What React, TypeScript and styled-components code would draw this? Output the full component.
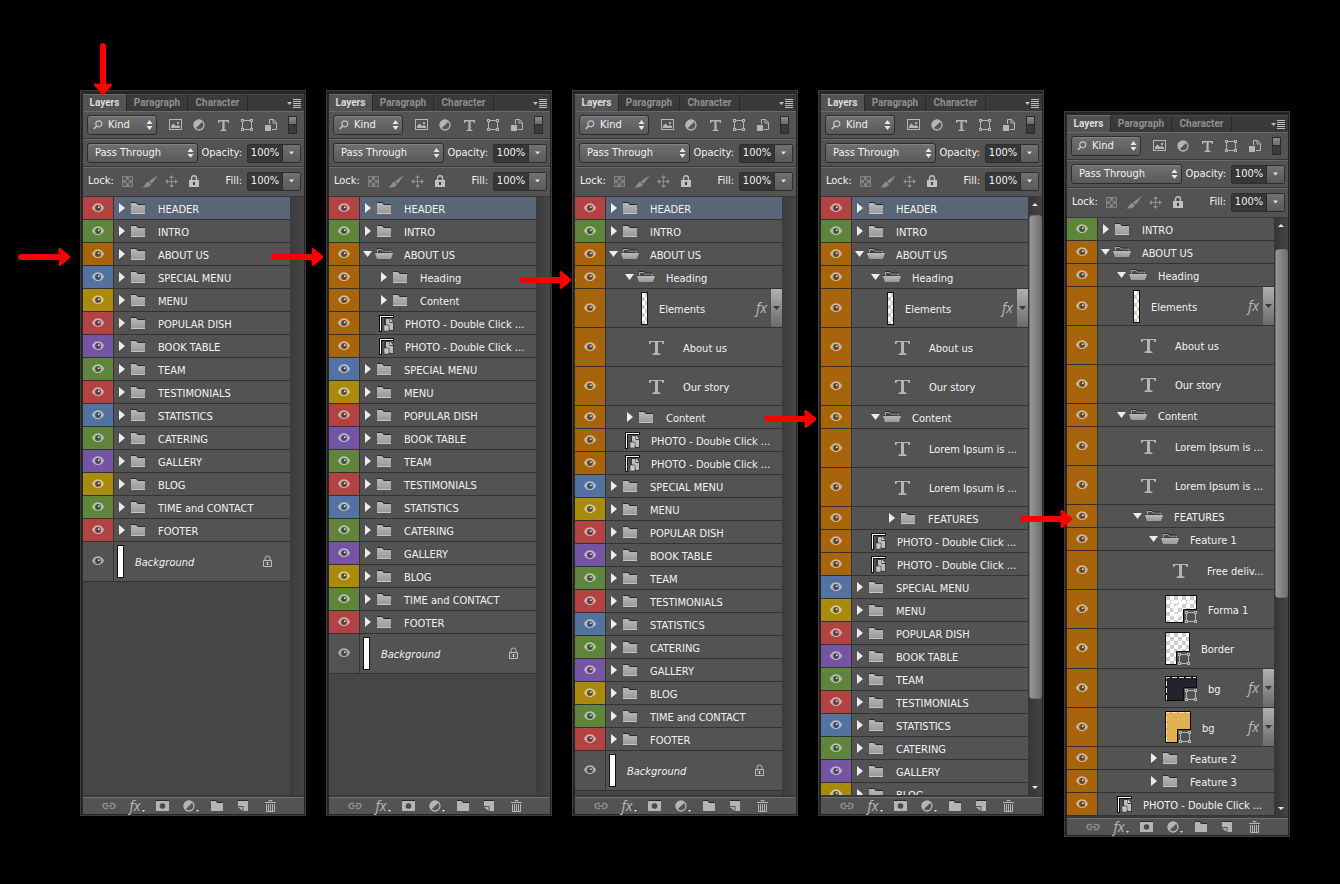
import React from "react";
import styled, { createGlobalStyle, css } from "styled-components";

const GlobalStyle = createGlobalStyle`
  *, *::before, *::after { box-sizing: border-box; }
  body {
    margin: 0;
    background: #000;
    color: #f0f0f0;
    font-family: "DejaVu Sans Condensed", "Noto Sans", sans-serif;
    font-size: 11px;
    line-height: 14px;
  }
  button, input, select { font: inherit; color: inherit; margin: 0; padding: 0; border: 0; }
  button { background: none; cursor: pointer; }
  svg { display: block; flex: none; }
`;

/* ---------- data ---------- */

const tones = {
  red: "#b24343",
  green: "#5f853d",
  orange: "#a8640b",
  blue: "#5372a0",
  yellow: "#a98a0b",
  violet: "#7455a3",
  none: "#535353",
};
type Tone = keyof typeof tones;
type Kind =
  | "folder" | "open" | "smart" | "text" | "strip" | "background"
  | "forma" | "border" | "dark" | "gold";

interface Layer {
  name: string;
  kind: Kind;
  tone: Tone;
  level: number;
  selected?: boolean;
}

const layer = (name: string, tone: Tone, kind: Kind = "folder", level = 0): Layer => ({ name, tone, kind, level });
const inner = (name: string, kind: Kind, level: number) => layer(name, "orange", kind, level);

const header: Layer = { ...layer("HEADER", "red"), selected: true };
const intro = layer("INTRO", "green");
const aboutClosed = layer("ABOUT US", "orange");
const aboutOpen = layer("ABOUT US", "orange", "open");
const photo = inner("PHOTO - Double Click ...", "smart", 1);
const headingOpen = [
  inner("Heading", "open", 1),
  inner("Elements", "strip", 2),
  inner("About us", "text", 2),
  inner("Our story", "text", 2),
];
const contentOpen = [
  inner("Content", "open", 1),
  inner("Lorem Ipsum is ...", "text", 2),
  inner("Lorem Ipsum is ...", "text", 2),
];
const sections = [
  layer("SPECIAL MENU", "blue"),
  layer("MENU", "yellow"),
  layer("POPULAR DISH", "red"),
  layer("BOOK TABLE", "violet"),
  layer("TEAM", "green"),
  layer("TESTIMONIALS", "red"),
  layer("STATISTICS", "blue"),
  layer("CATERING", "green"),
  layer("GALLERY", "violet"),
  layer("BLOG", "yellow"),
];
const rest = [
  ...sections,
  layer("TIME and CONTACT", "green"),
  layer("FOOTER", "red"),
  layer("Background", "none", "background"),
];

interface Pointer { x: number; y: number; down?: boolean }
interface PanelData {
  layers: Layer[];
  pointers: Pointer[];
  thumb?: { offset: number; length: number };
  lowered?: boolean;
}

const panels: PanelData[] = [
  {
    layers: [header, intro, aboutClosed, ...rest],
    pointers: [{ x: 14, y: -48, down: true }, { x: -63, y: 158 }],
  },
  {
    layers: [header, intro, aboutOpen, inner("Heading", "folder", 1), inner("Content", "folder", 1), photo, photo, ...rest],
    pointers: [{ x: -56, y: 158 }],
  },
  {
    layers: [header, intro, aboutOpen, ...headingOpen, inner("Content", "folder", 1), photo, photo, ...rest],
    pointers: [{ x: -54, y: 181 }],
  },
  {
    layers: [header, intro, aboutOpen, ...headingOpen, ...contentOpen, inner("FEATURES", "folder", 2), photo, photo, ...sections],
    pointers: [{ x: -55, y: 320 }],
    thumb: { offset: 18, length: 484 },
  },
  {
    layers: [
      intro, aboutOpen, ...headingOpen, ...contentOpen,
      inner("FEATURES", "open", 2),
      inner("Feature 1", "open", 3),
      inner("Free deliv...", "text", 4),
      inner("Forma 1", "forma", 4),
      inner("Border", "border", 4),
      inner("bg", "dark", 4),
      inner("bg", "gold", 4),
      inner("Feature 2", "folder", 3),
      inner("Feature 3", "folder", 3),
      photo,
    ],
    pointers: [{ x: -45, y: 399 }],
    thumb: { offset: 31, length: 349 },
    lowered: true,
  },
];

/* ---------- layout ---------- */

const Board = styled.main`
  display: flex;
  align-items: flex-start;
  gap: 20px;
  min-height: 100vh;
  padding: 90px 50px 47px 80px;
`;

const PanelFrame = styled.section<{ $lowered?: boolean }>`
  position: relative;
  flex: 1 1 0;
  min-width: 226px;
  height: calc(100vh - 158px);
  min-height: 480px;
  margin-top: ${(p) => (p.$lowered ? 21 : 0)}px;
  display: flex;
  flex-direction: column;
  background: #535353;
  border: solid #262626;
  border-width: 4px 2px 2px 3px;
  outline: 1px solid #3c3c3c;
  outline-offset: -1px;
`;

const TabStrip = styled.div`
  display: flex;
  height: 17px;
  background: #3a3a3a;
`;

const Tab = styled.button<{ $active?: boolean; $width: number }>`
  width: ${(p) => p.$width}px;
  font-family: Roboto, sans-serif;
  font-size: 10px;
  font-weight: 700;
  line-height: 16px;
  color: ${(p) => (p.$active ? "#dcdcdc" : "#8e8e8e")};
  background: ${(p) => (p.$active ? "#535353" : "transparent")};
  border-top: 1px solid ${(p) => (p.$active ? "#6a6a6a" : "#484848")};
  border-right: 1px solid #2a2a2a;
`;

const TabFill = styled.div`
  flex: 1;
  display: flex;
  align-items: center;
  justify-content: flex-end;
  padding-right: 3px;
  border-top: 1px solid #484848;
`;

const ControlRow = styled.div<{ $last?: boolean }>`
  display: flex;
  align-items: center;
  height: ${(p) => (p.$last ? 30 : 28)}px;
  padding: 0 3px ${(p) => (p.$last ? 2 : 0)}px 4px;
  border-top: 1px solid #686868;
  border-bottom: 1px solid #383838;
`;

const raised = css`
  background-image: linear-gradient(#707070, #5a5a5a);
  border: 1px solid #2e2e2e;
`;

const SelectBox = styled.label<{ $width: number }>`
  position: relative;
  display: flex;
  align-items: center;
  width: ${(p) => p.$width}px;
  height: 20px;
  ${raised}
  border-radius: 3px;
  box-shadow: inset 0 1px 0 #828282;
`;

const Select = styled.select<{ $inset: number }>`
  appearance: none;
  width: 100%;
  height: 18px;
  padding-left: ${(p) => p.$inset}px;
  background: none;
  outline: none;
`;

const SelectGlyph = styled.span<{ $left?: boolean }>`
  position: absolute;
  ${(p) => (p.$left ? "left: 5px;" : "right: 3px;")}
  pointer-events: none;
`;

const IconGroup = styled.div<{ $start: number }>`
  display: flex;
  align-items: center;
  padding-left: ${(p) => p.$start}px;
`;

const IconButton = styled.button<{ $width: number }>`
  display: flex;
  align-items: center;
  justify-content: center;
  width: ${(p) => p.$width}px;
  height: 16px;
`;

const MenuButton = styled(IconButton)`
  padding-left: 3px;
`;

const Toggle = styled.button`
  width: 9px;
  height: 18px;
  margin: 0 4px 0 auto;
  border: 1px solid #2c2c2c;
  background: linear-gradient(#8a8a8a, #6a6a6a 45%, #2c2c2c 45%, #3c3c3c 55%);
`;

const LockLabel = styled.span`
  padding-left: 1px;
`;

const Field = styled.div`
  display: flex;
  align-items: center;
  gap: 5px;
  margin-left: auto;
`;

const FieldBox = styled.div`
  display: flex;
  height: 19px;
  border: 1px solid #2e2e2e;
  border-radius: 2px;
`;

const ValueInput = styled.input`
  width: 34px;
  background: #373737;
  text-align: center;
  outline: none;
`;

const DropButton = styled.button`
  display: flex;
  align-items: center;
  justify-content: center;
  width: 18px;
  border-left: 1px solid #2e2e2e;
  background: linear-gradient(#707070, #5a5a5a);
`;

const ListArea = styled.div`
  flex: 1;
  min-height: 0;
  display: flex;
  overflow: hidden;
  background: #464646;
  border-bottom: 2px solid #3a3a3a;
`;

const LayerList = styled.ul`
  flex: 1;
  min-width: 0;
  margin: 0;
  padding: 0;
  list-style: none;
  overflow: hidden;
`;

const Row = styled.li<{ $height: number }>`
  display: flex;
  height: ${(p) => p.$height}px;
  border-bottom: 1px solid #343434;
`;

const EyeButton = styled.button<{ $tone: string }>`
  display: flex;
  align-items: center;
  justify-content: center;
  width: 31px;
  padding-bottom: 1px;
  border-right: 1px solid #343434;
  background: ${(p) => p.$tone};
`;

const RowBody = styled.div<{ $level: number; $selected?: boolean }>`
  flex: 1;
  min-width: 0;
  display: flex;
  align-items: center;
  padding-left: ${(p) => 3 + p.$level * 16}px;
  background: ${(p) => (p.$selected ? "#596678" : "#535353")};
`;

const Disclosure = styled.button`
  display: flex;
  align-items: center;
  gap: 2px;
`;

const TextSlot = styled.span`
  display: flex;
  justify-content: center;
  width: 31px;
`;

const LayerName = styled.span<{ $italic?: boolean }>`
  flex: 1;
  min-width: 0;
  padding: 3px 0 0 11px;
  white-space: nowrap;
  font-style: ${(p) => (p.$italic ? "italic" : "normal")};
`;

const Effects = styled.span`
  font-family: "Open Sans", sans-serif;
  font-size: 14px;
  font-style: italic;
  line-height: 16px;
  color: #b8b8b8;
`;

const EffectsButton = styled.button`
  display: flex;
  align-items: center;
  justify-content: center;
  align-self: stretch;
  width: 11px;
  margin-left: 4px;
  background: linear-gradient(#b0b0b0, #6a6a6a);
`;

const LockSlot = styled.span`
  padding-right: 17px;
`;

const ScrollTrack = styled.div<{ $active: boolean }>`
  position: relative;
  display: flex;
  flex-direction: column;
  justify-content: space-between;
  width: 14px;
  padding: 4px 1px;
  background: ${(p) => (p.$active ? "linear-gradient(90deg, #363636, #444)" : "linear-gradient(90deg, #3c3c3c, #464646)")};
`;

const ScrollThumb = styled.div`
  position: absolute;
  left: 1px;
  right: 0;
  border-radius: 3px;
  background: linear-gradient(90deg, #969696, #707070);
  border: 1px solid #6c6c6c;
`;

const ScrollButton = styled.button`
  display: flex;
  justify-content: center;
  padding: 2px 0;
`;

const Footer = styled.footer`
  display: flex;
  align-items: center;
  height: 17px;
  padding-left: 12px;
  border-top: 1px solid #6e6e6e;
`;

const PointerMark = styled.svg<{ $x: number; $y: number }>`
  position: absolute;
  z-index: 2;
  left: ${(p) => p.$x}px;
  top: ${(p) => p.$y}px;
  pointer-events: none;
`;

/* ---------- icons ---------- */

const ink = "#b4b4b4";

const UpDown = () => (
  <svg width="7" height="10" viewBox="0 0 7 10" fill="#e6e6e6"><path d="M3.5 0 6.5 4h-6zM3.5 10 .5 6h6z" /></svg>
);
const Caret = ({ color = "#e0e0e0", width = 5 }: { color?: string; width?: number }) => (
  <svg width={width} height="4" viewBox="0 0 7 4"><path d="M0 0h7L3.5 4z" fill={color} /></svg>
);
const CaretUp = () => (
  <svg width="6" height="3" viewBox="0 0 6 3"><path d="M0 3h6L3 0z" fill="#e6e6e6" /></svg>
);
const CaretDown = () => (
  <svg width="6" height="3" viewBox="0 0 6 3"><path d="M0 0h6L3 3z" fill="#e6e6e6" /></svg>
);
const MenuIcon = () => (
  <svg width="14" height="9" viewBox="0 0 14 9" fill="#bcbcbc">
    <path d="M0 3h5L2.500 6z" /><path d="M6 0h8v1H6zM6 2h8v1H6zM6 4h8v1H6zM6 6h8v1H6zM6 8h8v1H6z" />
  </svg>
);
const Magnifier = () => (
  <svg width="10" height="10" viewBox="0 0 10 10" fill="none" stroke="#c4c4c4">
    <circle cx="5.8" cy="3.8" r="3" strokeWidth="1.2" /><path d="M3.6 6 .8 9" strokeWidth="1.6" />
  </svg>
);
const ImageIcon = () => (
  <svg width="13" height="12" viewBox="0 0 13 12">
    <rect x=".5" y=".5" width="12" height="10" fill="none" stroke={ink} />
    <path d="M2 9V7l2.500-2.500L7 7l2-1 2 1.500V9z" fill={ink} /><rect x="8" y="3" width="2" height="2" fill={ink} />
  </svg>
);
const HalfCircle = () => (
  <svg width="12" height="12" viewBox="0 0 12 12">
    <circle cx="6" cy="6" r="5" fill="#555" stroke={ink} strokeWidth="1.3" />
    <path d="M2.200 9.800A5.300 5.300 0 0 1 9.800 2.200z" fill={ink} />
  </svg>
);
const Letter = ({ size }: { size: number }) => (
  <svg width={size} height={size} viewBox="0 0 15 15">
    <path d="M0 0h15v4h-1.300L12.800 2H9V13l2.500.8V15h-8v-1.200L6 13V2H2.200L1.300 4H0z" fill={ink} />
    {size > 12 && <path d="M0 0h15" stroke="#2c2c2c" strokeWidth="1.500" />}
  </svg>
);
const ShapeIcon = () => (
  <svg width="12" height="12" viewBox="0 0 12 12" fill="none" stroke={ink}>
    <path d="M3 1.500h6M3 10.500h6M1.500 3v6M10.500 3v6" />
    <rect x=".5" y=".5" width="2" height="2" /><rect x="9.500" y=".5" width="2" height="2" />
    <rect x=".5" y="9.500" width="2" height="2" /><rect x="9.500" y="9.500" width="2" height="2" />
  </svg>
);
const SmartIcon = () => (
  <svg width="12" height="12" viewBox="0 0 12 12">
    <path d="M4.500 5V.5h4l3 3v7H7" fill="none" stroke={ink} /><path d="M8 1v3h3.500" fill="none" stroke={ink} />
    <rect x="0" y="6" width="6" height="6" fill={ink} />
  </svg>
);
const Checker = () => (
  <svg width="11" height="11" viewBox="0 0 11 11">
    <rect width="11" height="11" fill="#808080" />
    <path d="M1 1h3v3H1zM7 1h3v3H7zM4 4h3v3H4zM1 7h3v3H1zM7 7h3v3H7z" fill="#5c5c5c" />
  </svg>
);
const Brush = () => (
  <svg width="16" height="13" viewBox="0 0 16 13" fill="#8c8c8c">
    <path d="M16 0 9.800 8.800 7 6.300z" /><path d="M6.300 6.800 9 9.300C8 12.200 4.500 13 0 12.300 3 11.800 3.200 7.800 6.300 6.800z" />
  </svg>
);
const MoveIcon = () => (
  <svg width="13" height="13" viewBox="0 0 13 13">
    <path d="M6.500 1v11M1 6.500h11" stroke="#8c8c8c" />
    <path d="M6.500 0 9 3H4zM6.500 13 4 10h5zM0 6.500 3 4v5zM13 6.500 10 9V4z" fill="#8c8c8c" />
  </svg>
);
const LockSolid = () => (
  <svg width="10" height="12" viewBox="0 0 10 12">
    <path d="M2.500 6V3.200a2.500 2.500 0 0 1 5 0V6" fill="none" stroke="#c0c0c0" strokeWidth="1.400" />
    <rect y="5" width="10" height="7" fill="#c0c0c0" /><rect x="4" y="7" width="2" height="3" fill="#444" />
  </svg>
);
const LockOutline = () => (
  <svg width="11" height="13" viewBox="0 0 11 13" fill="none" stroke="#bcbcbc">
    <path d="M3 6V3.500a2.500 2.500 0 0 1 5 0V6" /><path d="M1.500 5.500h8v6h-8z" /><path d="M3 7.500h5M3 9.500h5" strokeOpacity=".35" />
    <rect x="5" y="7" width="1" height="3" fill="#ddd" stroke="none" />
  </svg>
);
const Eye = () => (
  <svg width="12" height="10" viewBox="0 0 12 10">
    <path d="M0 5.200C2 1.500 4 .8 6 .8s4 .7 6 4.400C10 8.300 8 9 6 9S2 8.300 0 5.200z" fill="#fff" fillOpacity=".5" />
    <path d="M.3 4.600C2 1.300 4 .8 6 .8s4 .5 5.700 3.800" fill="none" stroke="#eee" strokeOpacity=".5" />
    <circle cx="6" cy="5" r="2.900" fill="#000" fillOpacity=".58" /><circle cx="6.800" cy="4.200" r=".9" fill="#ddd" />
  </svg>
);
const ArrowRight = () => (
  <svg width="10" height="10" viewBox="0 0 10 10"><path d="M2 0l6 5-6 5z" fill="#ececec" /></svg>
);
const ArrowDown = () => (
  <svg width="10" height="10" viewBox="0 0 10 10"><path d="M0 2h9L4.500 8z" fill="#ececec" /></svg>
);
const Gray = ({ id }: { id: string }) => (
  <defs><linearGradient id={id} x1="0" y1="0" x2="0" y2="1"><stop offset="0" stopColor="#b8b8b8" /><stop offset="1" stopColor="#989898" /></linearGradient></defs>
);
const FolderClosed = () => (
  <svg width="18" height="13" viewBox="0 0 18 13">
    <Gray id="fc" />
    <path d="M2 1h5.500L9 3h7v9H2z" fill="url(#fc)" />
    <path d="M2 .5h5.300L8.800 2.500H16" fill="none" stroke="#2b2b2b" /><path d="M2 11.500h14" stroke="#c2c2c2" />
  </svg>
);
const FolderOpen = () => (
  <svg width="18" height="13" viewBox="0 0 18 13">
    <Gray id="fo" />
    <path d="M2.500 6V1.500h4.300L8 3h7.500v3" fill="#4a4a4a" stroke="#a8a8a8" />
    <path d="M2 .5h5l1 1.500h7.500" fill="none" stroke="#2b2b2b" />
    <path d="M0 5h18l-2 6H2z" fill="url(#fo)" /><path d="M0 4.500h18" stroke="#333" strokeOpacity=".5" />
  </svg>
);
const SmartThumb = () => (
  <svg width="15" height="17" viewBox="0 0 15 17">
    <path d="M0 0h15v3H3v14H0z" fill="#101010" /><path d="M1 1h13v1H2v14H1z" fill="#fff" />
    <path d="M5 3h6l4 4v9H5z" fill="#3c3c3c" />
    <path d="M7 9V4h3.500v4H14v7h-3" fill="#bcbcbc" /><path d="M11 3.500 14 7h-3z" fill="#d0d0d0" />
    <path d="M5 10h5v6H5z" fill="#c4c4c4" stroke="#333" strokeWidth=".6" />
  </svg>
);
const StripThumb = ({ checker }: { checker?: boolean }) => (
  <svg width="7" height="33" viewBox="0 0 7 33">
    <rect x=".5" y=".5" width="6" height="32" fill="#fff" stroke="#111" />
    {checker && [1, 9, 17, 25].map((y) => <path key={y} d={`M4 ${y}h2v4H4zM1 ${y + 4}h3v${y > 20 ? 3 : 4}H1z`} fill="#ccc" />)}
  </svg>
);
const shapes = {
  forma: { w: 32, h: 28, fill: "url(#ck)" },
  border: { w: 25, h: 33, fill: "url(#ck)" },
  dark: { w: 32, h: 25, fill: "#23232b" },
  gold: { w: 26, h: 32, fill: "#dfb151" },
};
const ShapeThumb = ({ kind }: { kind: keyof typeof shapes }) => {
  const { w, h, fill } = shapes[kind];
  return (
    <svg width={w} height={h} viewBox={`0 0 ${w} ${h}`}>
      <defs>
        <pattern id="ck" width="8" height="8" patternUnits="userSpaceOnUse">
          <path d="M0 0h8v8H0z" fill="#fff" /><path d="M1 1h4v4H1zM5 5h3v3H5zM0 5h1v3H0zM5 0h3v1H5z" fill="#ccc" />
        </pattern>
      </defs>
      <path d={`M.5.5H${w - 0.5}V${h - 13.5}H${w - 13.5}V${h - 0.5}H.5z`} fill={fill} stroke="#0c0c0c" />
      {kind === "forma" && <path d="M6 7h5M14 5l3 5M22 7h5M8 14l5-3M5 20h7M10 24l5-5" stroke="#fff" strokeWidth="3" />}
      {(kind === "dark" || kind === "gold") && (
        <path
          d={`M1.500 ${h - 1}V1.500H${w - 1}`}
          fill="none"
          stroke="#fff"
          strokeOpacity={kind === "dark" ? 0.85 : 0.6}
          strokeDasharray="5 2"
        />
      )}
      <svg x={w - 12} y={h - 12} width="12" height="12"><ShapeIcon /></svg>
    </svg>
  );
};
const LinkIcon = () => (
  <svg width="14" height="8" viewBox="0 0 14 8" fill="none" stroke="#8a8a8a" strokeWidth="1.500">
    <path d="M6 1.500H3.500a2.500 2.500 0 0 0 0 5H6M8 1.500h2.500a2.500 2.500 0 0 1 0 5H8M4 4h6" />
  </svg>
);
const MaskIcon = () => (
  <svg width="13" height="12" viewBox="0 0 13 12"><path d="M0 1h13v10H0z" fill={ink} /><path d="M0 .5h13" stroke="#2c2c2c" /><circle cx="6.500" cy="6" r="2.800" fill="#4a4a4a" /></svg>
);
const NewFolder = () => (
  <svg width="12" height="12" viewBox="0 0 12 12"><path d="M0 1h5l1 2h6v8H0z" fill={ink} /><path d="M0 .5h5l1.300 2H12" fill="none" stroke="#2c2c2c" /></svg>
);
const NewLayer = () => (
  <svg width="11" height="12" viewBox="0 0 11 12"><path d="M0 1h10v10H5.500V6H0z" fill={ink} /><path d="M0 .5h10" stroke="#2c2c2c" /><path d="M0 7h4.500v4z" fill={ink} /></svg>
);
const Trash = () => (
  <svg width="11" height="12" viewBox="0 0 11 12" fill="none" stroke={ink}>
    <path d="M4 1.500V.5h3v1M0 2.500h11" /><path d="M1.500 4v7.500h8V4M3.500 4v7M5.500 4v7M7.500 4v7" />
  </svg>
);
const SmallCaret = () => <svg width="4" height="14" viewBox="0 0 4 14"><path d="M1 11h3L2.500 13z" fill="#ddd" /></svg>;

const Arrow = ({ pointer }: { pointer: Pointer }) =>
  pointer.down ? (
    <PointerMark $x={pointer.x - 3} $y={pointer.y - 4} width="18" height="54" viewBox="0 0 18 54" aria-hidden>
      <path d="M6 4a3 3 0 0 1 6 0v38l4.500-.5c1.500 0 2 1.500.5 3L10.500 52c-1 1-2 1-3 0L1 44.500c-1.500-1.500-1-3 .5-3L6 42z" fill="#f00" />
    </PointerMark>
  ) : (
    <PointerMark $x={pointer.x - 3} $y={pointer.y - 4} width="55" height="18" viewBox="0 0 55 18" aria-hidden>
      <path d="M4 6a3 3 0 0 0 0 6h38l-.5 4.500c0 1.500 1.500 2 3 .5L52.500 10.500c1-1 1-2 0-3L44.500 1c-1.500-1.500-3-1-3 .5L42 6z" fill="#f00" />
    </PointerMark>
  );

/* ---------- parts ---------- */

const rowHeight = (kind: Kind) => {
  if (kind === "folder" || kind === "open" || kind === "smart") return 23;
  return kind === "border" || kind === "background" ? 40 : 39;
};

const LayerMark = ({ kind }: { kind: Kind }) => {
  switch (kind) {
    case "folder":
      return <Disclosure aria-label="Expand group"><ArrowRight /><FolderClosed /></Disclosure>;
    case "open":
      return <Disclosure aria-label="Collapse group"><ArrowDown /><FolderOpen /></Disclosure>;
    case "smart":
      return <SmartThumb />;
    case "text":
      return <TextSlot><Letter size={15} /></TextSlot>;
    case "strip":
      return <StripThumb checker />;
    case "background":
      return <StripThumb />;
    default:
      return <ShapeThumb kind={kind} />;
  }
};

const LayerRow = ({ item }: { item: Layer }) => (
  <Row $height={rowHeight(item.kind)}>
    <EyeButton $tone={tones[item.tone]} aria-label={`Toggle ${item.name}`}><Eye /></EyeButton>
    <RowBody $level={item.level} $selected={item.selected}>
      <LayerMark kind={item.kind} />
      <LayerName $italic={item.kind === "background"}>{item.name}</LayerName>
      {item.kind === "background" && <LockSlot><LockOutline /></LockSlot>}
      {["strip", "dark", "gold"].includes(item.kind) && (
        <>
          <Effects>fx</Effects>
          <EffectsButton aria-label="Show effects"><Caret color="#3a3a3a" width={7} /></EffectsButton>
        </>
      )}
    </RowBody>
  </Row>
);

const Percent = ({ id, label }: { id: string; label: string }) => (
  <Field>
    <label htmlFor={id}>{label}</label>
    <FieldBox>
      <ValueInput id={id} defaultValue="100%" />
      <DropButton aria-label={`${label} slider`}><Caret /></DropButton>
    </FieldBox>
  </Field>
);

const LayersPanel = ({ data, index }: { data: PanelData; index: number }) => (
  <PanelFrame $lowered={data.lowered}>
    <TabStrip>
      <Tab $active $width={44}>Layers</Tab>
      <Tab $width={61}>Paragraph</Tab>
      <Tab $width={60}>Character</Tab>
      <TabFill><IconButton $width={14} aria-label="Panel menu"><MenuIcon /></IconButton></TabFill>
    </TabStrip>
    <ControlRow>
      <SelectBox $width={70}>
        <SelectGlyph $left><Magnifier /></SelectGlyph>
        <Select $inset={20} aria-label="Filter type"><option>Kind</option></Select>
        <SelectGlyph><UpDown /></SelectGlyph>
      </SelectBox>
      <IconGroup $start={6}>
        <IconButton $width={24} aria-label="Pixel layers"><ImageIcon /></IconButton>
        <IconButton $width={24} aria-label="Adjustment layers"><HalfCircle /></IconButton>
        <IconButton $width={24} aria-label="Type layers"><Letter size={11} /></IconButton>
        <IconButton $width={24} aria-label="Shape layers"><ShapeIcon /></IconButton>
        <IconButton $width={24} aria-label="Smart objects"><SmartIcon /></IconButton>
      </IconGroup>
      <Toggle aria-label="Toggle filtering" />
    </ControlRow>
    <ControlRow>
      <SelectBox $width={111}>
        <Select $inset={7} aria-label="Blend mode"><option>Pass Through</option></Select>
        <SelectGlyph><UpDown /></SelectGlyph>
      </SelectBox>
      <Percent id={`opacity-${index}`} label="Opacity:" />
    </ControlRow>
    <ControlRow $last>
      <LockLabel>Lock:</LockLabel>
      <IconGroup $start={3}>
        <IconButton $width={22} aria-label="Lock transparency"><Checker /></IconButton>
        <IconButton $width={22} aria-label="Lock pixels"><Brush /></IconButton>
        <IconButton $width={22} aria-label="Lock position"><MoveIcon /></IconButton>
        <IconButton $width={22} aria-label="Lock all"><LockSolid /></IconButton>
      </IconGroup>
      <Percent id={`fill-${index}`} label="Fill:" />
    </ControlRow>
    <ListArea>
      <LayerList>
        {data.layers.map((item, i) => <LayerRow key={i} item={item} />)}
      </LayerList>
      <ScrollTrack $active={!!data.thumb}>
        {data.thumb && (
          <>
            <ScrollButton aria-label="Scroll up"><CaretUp /></ScrollButton>
            <ScrollThumb style={{ top: data.thumb.offset, height: data.thumb.length }} />
            <ScrollButton aria-label="Scroll down"><CaretDown /></ScrollButton>
          </>
        )}
      </ScrollTrack>
    </ListArea>
    <Footer>
      <IconButton $width={27} aria-label="Link layers"><LinkIcon /></IconButton>
      <MenuButton $width={27} aria-label="Layer style"><Effects>fx</Effects><SmallCaret /></MenuButton>
      <IconButton $width={27} aria-label="Add mask"><MaskIcon /></IconButton>
      <MenuButton $width={27} aria-label="New adjustment layer"><HalfCircle /><SmallCaret /></MenuButton>
      <IconButton $width={27} aria-label="New group"><NewFolder /></IconButton>
      <IconButton $width={27} aria-label="New layer"><NewLayer /></IconButton>
      <IconButton $width={27} aria-label="Delete layer"><Trash /></IconButton>
    </Footer>
    {data.pointers.map((p, i) => <Arrow key={i} pointer={p} />)}
  </PanelFrame>
);

export default function App() {
  return (
    <>
      <GlobalStyle />
      <Board>
        {panels.map((p, i) => <LayersPanel key={i} data={p} index={i} />)}
      </Board>
    </>
  );
}
